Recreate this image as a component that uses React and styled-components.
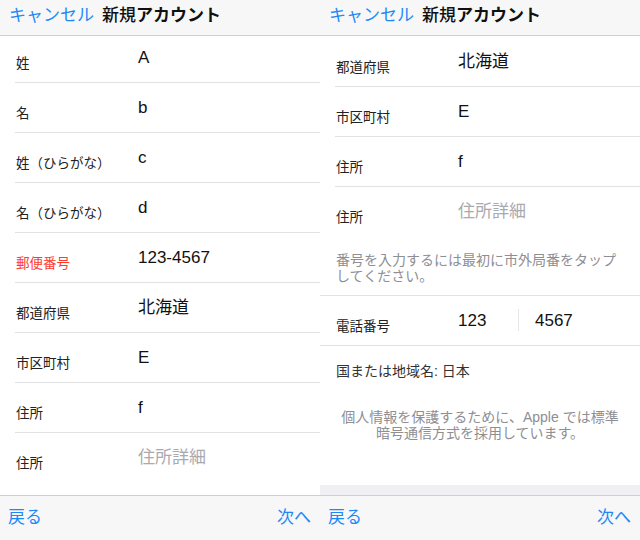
import React from "react";
import styled, { createGlobalStyle } from "styled-components";

const GlobalStyle = createGlobalStyle`
  html, body {
    margin: 0;
    padding: 0;
    background: #ffffff;
  }
  body {
    font-family: "Liberation Sans", "Noto Sans CJK JP", sans-serif;
    -webkit-font-smoothing: antialiased;
  }
`;

const Page = styled.div`
  display: flex;
  width: 640px;
  height: 540px;
  overflow: hidden;
`;

const Screen = styled.div`
  width: 320px;
  height: 540px;
  display: flex;
  flex-direction: column;
  background: #ffffff;
`;

const NavBar = styled.div`
  height: 36px;
  flex-shrink: 0;
  box-sizing: border-box;
  display: flex;
  align-items: center;
  gap: 8px;
  padding: 0 0 3px 9px;
  background: #f7f7f7;
  border-bottom: 1px solid #cfcfd2;
  font-size: 17px;
  line-height: 20px;
`;

const NavButton = styled.span`
  color: #1e88f7;
`;

const Title = styled.span`
  color: #111;
  font-weight: 500;
  b {
    font-weight: 700;
  }
`;

const Content = styled.div`
  flex: 1;
  display: flex;
  flex-direction: column;
  overflow: hidden;
  padding-top: ${(p) => p.$top || 0}px;
  background: #ffffff;
`;

const Row = styled.div`
  height: ${(p) => p.$height || 50}px;
  flex-shrink: 0;
  display: flex;
  align-items: flex-start;
  margin-left: 15px;
  box-sizing: border-box;
  border-bottom: ${(p) => (p.$last ? "none" : "1px solid #e2e2e4")};
`;

const PhoneRow = styled.div`
  height: 50px;
  flex-shrink: 0;
  display: flex;
  align-items: flex-start;
  padding-left: 15px;
  box-sizing: border-box;
  border-bottom: 1px solid #e2e2e4;
`;

const Label = styled.div`
  width: 122px;
  padding-left: 1px;
  padding-top: ${(p) => 23 - (p.$shift || 0)}px;
  font-size: 13.5px;
  line-height: 16px;
  color: ${(p) => (p.$error ? "#ff3b30" : "#222")};
`;

const Value = styled.div`
  padding-top: ${(p) => 15 - (p.$shift || 0)}px;
  font-size: 17px;
  line-height: 20px;
  color: ${(p) => (p.$placeholder ? "#a9a9ae" : "#111")};
`;

const PhoneValue = styled(Value)`
  width: 60px;
`;

const Divider = styled.div`
  width: 1px;
  height: 22px;
  margin-top: 13px;
  margin-right: 16px;
  background: #e6e6e8;
`;

const Note = styled.div`
  padding: ${(p) => p.$pad || "15px 16px 11px"};
  font-size: 14px;
  line-height: 16px;
  color: ${(p) => p.$color || "#8e8e93"};
  text-align: ${(p) => (p.$center ? "center" : "left")};
  white-space: ${(p) => (p.$center ? "nowrap" : "normal")};
  border-bottom: ${(p) => (p.$line ? "1px solid #e2e2e4" : "none")};
`;

const Spacer = styled.div`
  flex: 1;
`;

const Band = styled.div`
  height: 10px;
  flex-shrink: 0;
  background: #efeff4;
`;

const ToolBar = styled.div`
  height: 45px;
  flex-shrink: 0;
  box-sizing: border-box;
  display: flex;
  align-items: center;
  justify-content: space-between;
  padding: 0 9px 1px 8px;
  background: #f7f7f7;
  border-top: 1px solid #cfcfd2;
  font-size: 17px;
  line-height: 20px;
  color: #1e88f7;
`;

const leftRows = [
  { label: "姓", value: "A" },
  { label: "名", value: "b" },
  { label: "姓（ひらがな）", value: "c" },
  { label: "名（ひらがな）", value: "d" },
  { label: "郵便番号", value: "123-4567", error: true },
  { label: "都道府県", value: "北海道" },
  { label: "市区町村", value: "E" },
  { label: "住所", value: "f" },
  { label: "住所", value: "住所詳細", placeholder: true, last: true },
];

const rightRows = [
  { label: "都道府県", value: "北海道" },
  { label: "市区町村", value: "E" },
  { label: "住所", value: "f" },
  { label: "住所", value: "住所詳細", placeholder: true, last: true },
];

function Header() {
  return (
    <NavBar>
      <NavButton>キャンセル</NavButton>
      <Title>
        新規<b>アカウント</b>
      </Title>
    </NavBar>
  );
}

function Footer() {
  return (
    <ToolBar>
      <span>戻る</span>
      <span>次へ</span>
    </ToolBar>
  );
}

// the first row of the left screen is scrolled a little under the nav bar
function FieldRow({ row, first }) {
  const shift = first ? 3 : 0;
  return (
    <Row $height={first ? 47 : 50} $last={row.last}>
      <Label $error={row.error} $shift={shift}>
        {row.label}
      </Label>
      <Value $placeholder={row.placeholder} $shift={shift}>
        {row.value}
      </Value>
    </Row>
  );
}

export default function App() {
  return (
    <Page>
      <GlobalStyle />
      <Screen>
        <Header />
        <Content>
          {leftRows.map((row, idx) => (
            <FieldRow key={idx} row={row} first={idx === 0} />
          ))}
        </Content>
        <Footer />
      </Screen>
      <Screen>
        <Header />
        <Content $top={1}>
          {rightRows.map((row, idx) => (
            <FieldRow key={idx} row={row} />
          ))}
          <Note $line>
            番号を入力するには最初に市外局番をタップしてください。
          </Note>
          <PhoneRow>
            <Label>電話番号</Label>
            <PhoneValue>123</PhoneValue>
            <Divider />
            <Value>4567</Value>
          </PhoneRow>
          <Note $pad="17px 16px 0" $color="#333">
            国または地域名: 日本
          </Note>
          <Note $pad="30px 0 0" $center>
            個人情報を保護するために、Apple では標準
            <br />
            暗号通信方式を採用しています。
          </Note>
          <Spacer />
          <Band />
        </Content>
        <Footer />
      </Screen>
    </Page>
  );
}
